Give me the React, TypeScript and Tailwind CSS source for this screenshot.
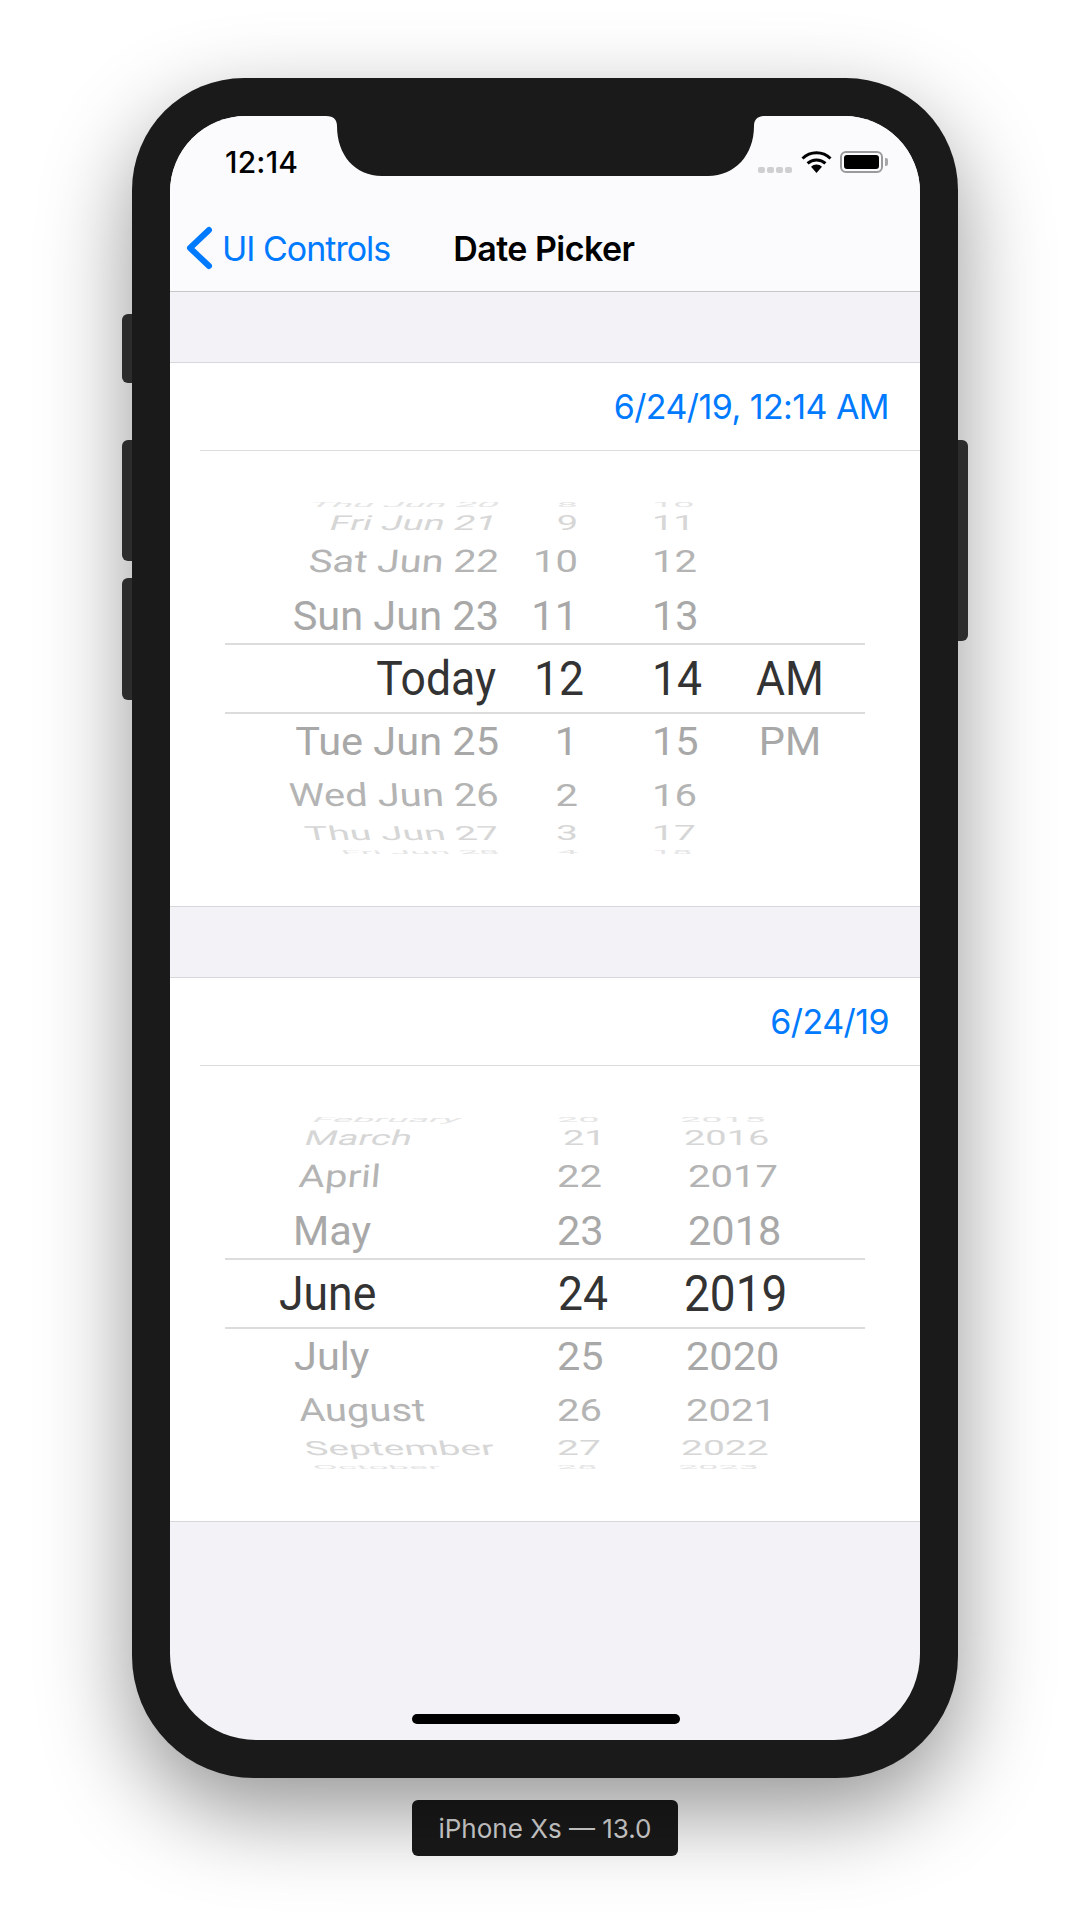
const rowHeights = ["h-[4px]", "h-[34px]", "h-[44px]", "h-[64px]", "h-[62px]", "h-[64px]", "h-[44px]", "h-[30px]", "h-[8px]"];

const rowText = [
  "text-[38px] scale-y-[0.2] text-[#e4e4e4]",
  "text-[38px] scale-y-[0.54] text-[#d6d6d6]",
  "text-[40px] scale-y-[0.78] text-[#b4b4b4]",
  "text-[41.5px] scale-y-[0.97] text-[#a8a8a8]",
  "text-[44.5px] scale-y-[1.07] text-[#333333]",
  "text-[41.5px] scale-y-[0.95] text-[#a8a8a8]",
  "text-[40px] scale-y-[0.8] text-[#b4b4b4]",
  "text-[39px] scale-y-[0.5] text-[#d6d6d6]",
  "text-[36px] scale-y-[0.15] text-[#e4e4e4]",
];

const rowTilt = ["-skew-x-12", "-skew-x-[10deg]", "-skew-x-[4deg]", "", "", "", "skew-x-3", "skew-x-6", "skew-x-6"];

type Item = { t: string; c?: string };
type Col = { width: string; justify: string; tilt?: boolean; items: Item[] };

const dateTimeCols: Col[] = [
  {
    width: "w-[274px]",
    justify: "justify-end",
    tilt: true,
    items: [
      { t: "Thu Jun 20" },
      { t: "Fri Jun 21", c: "-translate-x-[2px]" },
      { t: "Sat Jun 22" },
      { t: "Sun Jun 23" },
      { t: "Today", c: "-translate-x-[3px]" },
      { t: "Tue Jun 25" },
      { t: "Wed Jun 26" },
      { t: "Thu Jun 27" },
      { t: "Fri Jun 28" },
    ],
  },
  {
    width: "w-[79px]",
    justify: "justify-end",
    items: [{ t: "8" }, { t: "9" }, { t: "10" }, { t: "11" }, { t: "12", c: "translate-x-[6px]" }, { t: "1" }, { t: "2" }, { t: "3" }, { t: "4" }],
  },
  {
    width: "w-[137px] pl-[74px]",
    justify: "justify-start",
    items: ["10", "11", "12", "13", "14", "15", "16", "17", "18"].map((t) => ({ t })),
  },
  {
    width: "w-[150px]",
    justify: "justify-center",
    items: ["", "", "", "", "AM", "PM", "", "", ""].map((t) => ({ t })),
  },
];

const dateCols: Col[] = [
  {
    width: "w-[332px]",
    justify: "justify-start",
    tilt: true,
    items: [
      { t: "February", c: "ml-[88px]" },
      { t: "March", c: "ml-[80px]" },
      { t: "April", c: "ml-[74px]" },
      { t: "May", c: "ml-[68px]" },
      { t: "June", c: "ml-[54px]" },
      { t: "July", c: "ml-[69px]" },
      { t: "August", c: "ml-[74px]" },
      { t: "September", c: "ml-[80px]" },
      { t: "October", c: "ml-[88px]" },
    ],
  },
  {
    width: "w-[127px]",
    justify: "justify-start",
    items: [
      { t: "20" },
      { t: "21", c: "ml-[6px]" },
      { t: "22" },
      { t: "23" },
      { t: "24", c: "ml-[1px]" },
      { t: "25" },
      { t: "26" },
      { t: "27" },
      { t: "28" },
    ],
  },
  {
    width: "w-[181px]",
    justify: "justify-start",
    items: [
      { t: "2015", c: "-ml-[4px]" },
      { t: "2016" },
      { t: "2017", c: "ml-[4px]" },
      { t: "2018", c: "ml-[4px]" },
      { t: "2019", c: "text-[46px]" },
      { t: "2020", c: "ml-[2px]" },
      { t: "2021", c: "ml-[2px]" },
      { t: "2022", c: "-ml-[3px]" },
      { t: "2023", c: "-ml-[6px]" },
    ],
  },
];

function Wheel({ cols }: { cols: Col[] }) {
  return (
    <div className="relative h-[455px] pt-[51px] px-[55px]">
      <div className="flex h-[354px] overflow-hidden font-['Roboto',sans-serif] leading-none">
        {cols.map((col, i) => (
          <div key={i} className={`${col.width} shrink-0 flex flex-col`}>
            {col.items.map((item, r) => (
              <div key={r} className={`${rowHeights[r]} flex items-center ${col.justify} whitespace-nowrap`}>
                <span className={`inline-block ${rowText[r]} ${col.tilt ? rowTilt[r] : ""} ${item.c ?? ""}`}>{item.t}</span>
              </div>
            ))}
          </div>
        ))}
      </div>
      {/* selection band */}
      <div className="absolute left-[55px] right-[55px] top-[192px] h-[71px] border-y-2 border-[#dcdcdc]" />
    </div>
  );
}

function Section({ value, cols }: { value: string; cols: Col[] }) {
  return (
    <section className="mt-[70px] bg-white border-y border-[#d8d8dc]">
      <div className="ml-[30px] h-[88px] pr-[31px] flex items-center justify-end border-b border-[#dcdcdf] text-[34px] tracking-[-0.57px] text-[#007aff]">
        {value}
      </div>
      <Wheel cols={cols} />
    </section>
  );
}

function StatusIcons() {
  return (
    <div className="absolute left-[588px] top-[35px] flex items-start">
      <div className="mt-[16px] flex gap-[2px]">
        <i className="block w-[7px] h-[6px] rounded-[2px] bg-[#cfcfd1]" />
        <i className="block w-[7px] h-[6px] rounded-[2px] bg-[#cfcfd1]" />
        <i className="block w-[7px] h-[6px] rounded-[2px] bg-[#cfcfd1]" />
        <i className="block w-[7px] h-[6px] rounded-[2px] bg-[#cfcfd1]" />
      </div>
      <svg className="ml-[9px]" width="31" height="22" viewBox="0 0 31 22">
        <path d="M1.5 7.5 A20 20 0 0 1 29.5 7.5" fill="none" stroke="#000" strokeWidth="3" />
        <path d="M6.6 12.4 A13 13 0 0 1 24.4 12.4" fill="none" stroke="#000" strokeWidth="3" />
        <path d="M10 15.8 A7.5 7.5 0 0 1 21 15.8 L15.5 22 Z" fill="#000" />
      </svg>
      <div className="ml-[8px] w-[43px] h-[22px] rounded-[6px] border-2 border-[#9a9a9c] p-[2px]">
        <div className="w-full h-full rounded-[3px] bg-black" />
      </div>
      <div className="ml-[2px] mt-[7px] w-[3px] h-[8px] rounded-r-[2px] bg-[#a8a8aa]" />
    </div>
  );
}

export default function App() {
  return (
    <div className="w-[1090px] h-[1928px] bg-white overflow-hidden flex flex-col items-center pt-[78px] font-['Inter',sans-serif]">
      <div className="relative w-[826px] h-[1700px] shrink-0 p-[38px] rounded-t-[112px] rounded-b-[122px] bg-[#1a1a1a] shadow-[0_34px_90px_rgba(0,0,0,0.42)]">
        {/* side buttons */}
        <div className="absolute -left-[10px] top-[236px] w-[10px] h-[69px] rounded-l-[6px] bg-[#2c2c2c]" />
        <div className="absolute -left-[10px] top-[362px] w-[10px] h-[121px] rounded-l-[6px] bg-[#2c2c2c]" />
        <div className="absolute -left-[10px] top-[500px] w-[10px] h-[122px] rounded-l-[6px] bg-[#2c2c2c]" />
        <div className="absolute -right-[10px] top-[362px] w-[10px] h-[201px] rounded-r-[6px] bg-[#2c2c2c]" />

        <div className="relative w-[750px] h-[1624px] rounded-t-[76px] rounded-b-[86px] overflow-hidden bg-[#f2f2f7]">
          <header className="relative h-[176px] bg-[#fbfbfd] border-b border-[#c6c6c8]">
            <span className="absolute left-[55px] top-[24px] text-[30px] font-medium tracking-[0.2px] text-black">12:14</span>
            <StatusIcons />
            <div className="absolute left-0 right-0 top-[108px] h-[48px] flex items-center">
              <svg className="ml-[14px]" width="30" height="44" viewBox="0 0 30 44">
                <path d="M25 4 L6 22 L25 40" fill="none" stroke="#007aff" strokeWidth="6" strokeLinecap="round" strokeLinejoin="round" />
              </svg>
              <span className="ml-[8px] text-[34px] tracking-[-1px] text-[#007aff]">UI Controls</span>
              <span className="ml-[63px] text-[34px] font-semibold tracking-[-0.55px] text-black">Date Picker</span>
            </div>
          </header>

          <Section value="6/24/19, 12:14 AM" cols={dateTimeCols} />
          <Section value="6/24/19" cols={dateCols} />

          {/* notch */}
          <svg className="absolute left-[150px] top-0" width="450" height="60" viewBox="0 0 450 60">
            <path d="M6 0 C14 0 17 4 17 10 C17 39 35 60 62 60 L388 60 C415 60 434 39 434 10 C434 4 437 0 445 0 Z" fill="#1a1a1a" />
          </svg>

          {/* home indicator */}
          <div className="absolute left-[242px] bottom-[16px] w-[268px] h-[10px] rounded-[5px] bg-black" />
        </div>
      </div>

      <div className="mt-[22px] w-[266px] h-[56px] shrink-0 flex items-center justify-center rounded-[6px] bg-[#1a1a1a] text-[26px] text-[#dcdcdc]">
        iPhone Xs — 13.0
      </div>
    </div>
  );
}
